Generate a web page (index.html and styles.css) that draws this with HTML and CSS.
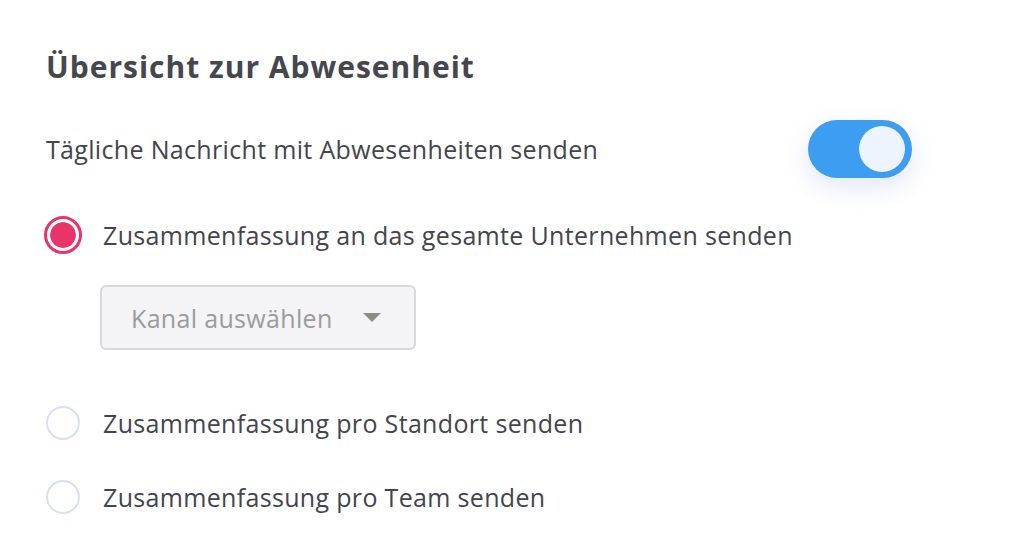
FILE: index.html
```html
<!DOCTYPE html>
<html lang="de">
<head>
<meta charset="utf-8">
<link rel="stylesheet" href="styles.css">
</head>
<body>
<main class="panel">
  <h1 class="title">Übersicht zur Abwesenheit</h1>
  <div class="setting">
    <span class="setting-label">Tägliche Nachricht mit Abwesenheiten senden</span>
    <span class="toggle"><span class="knob"></span></span>
  </div>
  <div class="options">
    <div class="option">
      <span class="radio checked"></span>
      <span class="option-label">Zusammenfassung an das gesamte Unternehmen senden</span>
    </div>
    <div class="select">
      <span class="select-text">Kanal auswählen</span>
      <span class="caret"></span>
    </div>
    <div class="option spaced">
      <span class="radio"></span>
      <span class="option-label">Zusammenfassung pro Standort senden</span>
    </div>
    <div class="option">
      <span class="radio"></span>
      <span class="option-label">Zusammenfassung pro Team senden</span>
    </div>
  </div>
</main>
</body>
</html>
```
FILE: styles.css
```css
html, body {
  margin: 0;
  background: #ffffff;
}
body {
  font-family: "Open Sans", "Liberation Sans", sans-serif;
  color: #43454e;
}
.panel {
  width: 866px;
  padding: 43px 0 0 46px;
}
.title {
  margin: 0;
  font-size: 30px;
  line-height: 48px;
  font-weight: 700;
  letter-spacing: 1px;
  color: #45474f;
}
.setting {
  margin-top: 29px;
  display: flex;
  align-items: center;
  justify-content: space-between;
  height: 58px;
}
.setting-label {
  font-size: 25px;
  letter-spacing: 0.33px;
}
.toggle {
  width: 104px;
  height: 58px;
  border-radius: 29px;
  background: #3d9df0;
  display: flex;
  align-items: center;
  justify-content: flex-end;
  padding-right: 7px;
  box-sizing: border-box;
  box-shadow: 0 8px 24px rgba(90, 110, 200, 0.18);
}
.knob {
  width: 46px;
  height: 46px;
  border-radius: 50%;
  background: #eef4fe;
}
.options {
  margin-top: 37px;
  display: flex;
  flex-direction: column;
}
.option {
  display: flex;
  align-items: center;
  height: 40px;
}
.option.spaced {
  margin-top: 53px;
  margin-bottom: 34px;
}
.radio {
  width: 34px;
  height: 34px;
  box-sizing: border-box;
  border-radius: 50%;
  border: 2px solid #d8e1f0;
  margin-left: 0;
  margin-right: 23px;
  flex: none;
}
.radio.checked {
  width: 38px;
  height: 38px;
  margin-left: -2px;
  margin-right: 21px;
  border: 3px solid #e9336b;
  padding: 3px;
  background: #e9336b content-box;
  box-shadow: inset 0 0 0 3px #ffffff;
}
.option-label {
  font-size: 25px;
  letter-spacing: 0.33px;
  color: #43454e;
}
.select {
  margin-top: 30px;
  margin-left: 54px;
  width: 316px;
  height: 65px;
  box-sizing: border-box;
  border: 2px solid #d9d9dc;
  border-radius: 6px;
  background: #f4f4f6;
  display: flex;
  align-items: center;
  padding-left: 29px;
}
.select-text {
  font-size: 25px;
  letter-spacing: 0.33px;
  color: #9b9b9b;
}
.caret {
  margin-left: 30px;
  width: 0;
  height: 0;
  border-left: 9px solid transparent;
  border-right: 9px solid transparent;
  border-top: 9px solid #8e8c88;
}
```
